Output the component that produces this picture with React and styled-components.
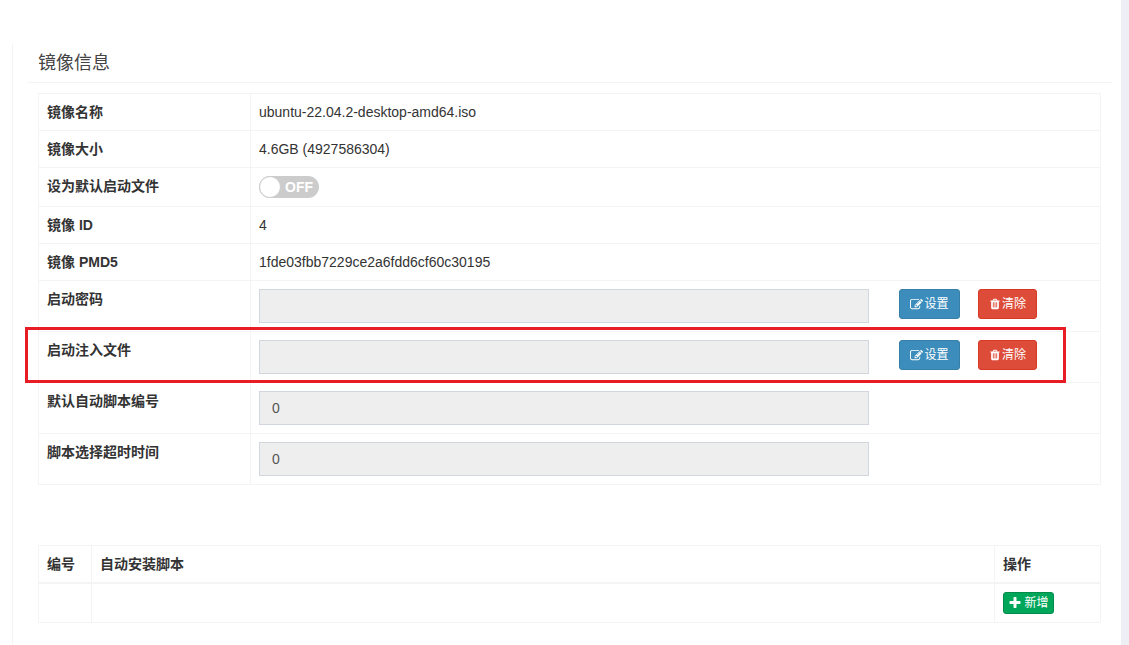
import styled, { createGlobalStyle } from 'styled-components'

const Global = createGlobalStyle`
html, body {
    margin: 0;
    padding: 0;
    height: 100%;
    overflow: hidden;
    background-color: #ecf0f5;
}
* { box-sizing: border-box; }
`;

const Page = styled.div`
    width: 1121px;
    height: 645px;
    background-color: white;
    padding: 43px 0 0 12px;
    font-family: "Liberation Sans", "Noto Sans CJK SC", sans-serif;
    font-size: 14px;
    line-height: 20px;
    color: #333;
    overflow: hidden;
`;

const Box = styled.div`
    height: 602px;
    border-left: 1px solid #f4f4f4;
    padding: 0 9px 0 15px;
    position: relative;
`;

const Title = styled.h3`
    margin: 0 0 10px;
    height: 40px;
    padding: 9px 0 0 10px;
    font-size: 18px;
    font-weight: 400;
    line-height: 22px;
    color: #444;
    border-bottom: 1px solid #f4f4f4;
`;

const Content = styled.div`
    padding: 0 10px;
`;

const Table = styled.table`
    width: 1063px;
    table-layout: fixed;
    border-collapse: collapse;
    border: 1px solid #f4f4f4;
    margin-bottom: ${p => p.$gap || 0}px;
`;

const Cell = styled.td`
    border: 1px solid #f4f4f4;
    padding: 8px;
    vertical-align: top;
    font-weight: ${p => (p.$bold ? 700 : 400)};
    height: ${p => p.$h || 37}px;
`;

const HeadCell = styled.th`
    border: 1px solid #f4f4f4;
    border-bottom-width: 2px;
    padding: 8px;
    text-align: left;
    height: 37px;
    font-weight: 700;
`;

const Field = styled.div`
    display: flex;
    align-items: flex-start;
`;

const Input = styled.div`
    width: 610px;
    height: 34px;
    padding: 6px 12px;
    background-color: #eee;
    border: 1px solid #d2d6de;
    color: #555;
    font-size: 14px;
    line-height: 20px;
`;

const Btn = styled.button`
    height: 30px;
    width: ${p => p.$w}px;
    margin-left: ${p => p.$ml}px;
    padding: 0;
    display: flex;
    align-items: center;
    justify-content: center;
    gap: 1px;
    border-radius: 3px;
    border: 1px solid ${p => p.$line};
    background-color: ${p => p.$bg};
    color: white;
    font-family: inherit;
    font-size: 12px;
    line-height: 18px;
`;

const AddBtn = styled.button`
    width: 51px;
    height: 22px;
    padding: 0;
    display: flex;
    align-items: center;
    justify-content: center;
    gap: 2px;
    border-radius: 3px;
    border: 1px solid #008d4c;
    background-color: #00a65a;
    color: white;
    font-family: inherit;
    font-size: 12px;
    line-height: 18px;
`;

const Switch = styled.div`
    width: 60px;
    height: 22px;
    border-radius: 11px;
    background-color: #ccc;
    display: flex;
    align-items: center;
    position: relative;
    padding-left: 26px;
    color: white;
    font-size: 14px;
    font-weight: 700;
    line-height: 22px;
`;

const Knob = styled.span`
    position: absolute;
    left: 0;
    top: 0;
    width: 22px;
    height: 22px;
    border-radius: 50%;
    background-color: white;
    border: 1px solid #ccc;
`;

const Highlight = styled.div`
    position: absolute;
    left: 12px;
    top: 284px;
    width: 1041px;
    height: 56px;
    border: 3px solid #e81c24;
    pointer-events: none;
`;

const Svg = styled.svg`
    width: ${p => p.$size}px;
    height: ${p => p.$size}px;
    fill: currentColor;
    flex: none;
`;

// font awesome 4 glyphs, the icon packages only carry the newer shapes
const EditIcon = () => (
  <Svg $size={13} viewBox="0 0 1792 1792">
    <path d="M888 1184l116-116-152-152-116 116v56h96v96h56zm440-720q-16-16-33 1l-350 350q-17 17-1 33t33-1l350-350q17-17 1-33zm80 594v190q0 119-84.500 203.500t-203.500 84.500h-832q-119 0-203.500-84.500t-84.500-203.500v-832q0-119 84.500-203.500t203.500-84.500h832q63 0 117 25 15 7 18 23 3 17-9 29l-49 49q-14 14-32 8-23-6-45-6h-832q-66 0-113 47t-47 113v832q0 66 47 113t113 47h832q66 0 113-47t47-113v-126q0-13 9-22l64-64q15-15 35-7t20 29zm-96-738l288 288-672 672h-288v-288zm444 132l-92 92-288-288 92-92q28-28 68-28t68 28l152 152q28 28 28 68t-28 68z" />
  </Svg>
);

const TrashIcon = () => (
  <Svg $size={12} viewBox="0 0 1792 1792">
    <path d="M704 1376v-704q0-14-9-23t-23-9h-64q-14 0-23 9t-9 23v704q0 14 9 23t23 9h64q14 0 23-9t9-23zm256 0v-704q0-14-9-23t-23-9h-64q-14 0-23 9t-9 23v704q0 14 9 23t23 9h64q14 0 23-9t9-23zm256 0v-704q0-14-9-23t-23-9h-64q-14 0-23 9t-9 23v704q0 14 9 23t23 9h64q14 0 23-9t9-23zm-544-992h448l-48-117q-7-9-17-11h-317q-10 2-17 11zm928 32v64q0 14-9 23t-23 9h-96v948q0 83-47 143.500t-113 60.500h-832q-66 0-113-58.500t-47-141.500v-952h-96q-14 0-23-9t-9-23v-64q0-14 9-23t23-9h309l70-167q15-37 54-63t79-26h320q40 0 79 26t54 63l70 167h309q14 0 23 9t9 23z" />
  </Svg>
);

const PlusIcon = () => (
  <Svg $size={14} viewBox="0 0 1792 1792">
    <path d="M1600 736v192q0 40-28 68t-68 28h-416v416q0 40-28 68t-68 28h-192q-40 0-68-28t-28-68v-416h-416q-40 0-68-28t-28-68v-192q0-40 28-68t68-28h416v-416q0-40 28-68t68-28h192q40 0 68 28t28 68v416h416q40 0 68 28t28 68z" />
  </Svg>
);

function FileField() {
  return (
    <Field>
      <Input />
      <Btn $w={61} $ml={30} $bg="#3c8dbc" $line="#367fa9"><EditIcon />设置</Btn>
      <Btn $w={59} $ml={18} $bg="#dd4b39" $line="#d73925"><TrashIcon />清除</Btn>
    </Field>
  )
}

export default function App() {
  return (
    <Page>
      <Global />
      <Box>
        <Title>镜像信息</Title>
        <Content>
          <Table $gap={60}>
            <colgroup>
              <col width="212" />
              <col />
            </colgroup>
            <tbody>
              <tr><Cell $bold>镜像名称</Cell><Cell>ubuntu-22.04.2-desktop-amd64.iso</Cell></tr>
              <tr><Cell $bold>镜像大小</Cell><Cell>4.6GB (4927586304)</Cell></tr>
              <tr><Cell $bold $h={39}>设为默认启动文件</Cell><Cell $h={39}><Switch><Knob />OFF</Switch></Cell></tr>
              <tr><Cell $bold>镜像 ID</Cell><Cell>4</Cell></tr>
              <tr><Cell $bold>镜像 PMD5</Cell><Cell>1fde03fbb7229ce2a6fdd6cf60c30195</Cell></tr>
              <tr><Cell $bold $h={51}>启动密码</Cell><Cell $h={51}><FileField /></Cell></tr>
              <tr><Cell $bold $h={51}>启动注入文件</Cell><Cell $h={51}><FileField /></Cell></tr>
              <tr><Cell $bold $h={51}>默认自动脚本编号</Cell><Cell $h={51}><Input>0</Input></Cell></tr>
              <tr><Cell $bold $h={51}>脚本选择超时时间</Cell><Cell $h={51}><Input>0</Input></Cell></tr>
            </tbody>
          </Table>
          <Table>
            <colgroup>
              <col width="53" />
              <col />
              <col width="106" />
            </colgroup>
            <thead>
              <tr><HeadCell>编号</HeadCell><HeadCell>自动安装脚本</HeadCell><HeadCell>操作</HeadCell></tr>
            </thead>
            <tbody>
              <tr>
                <Cell $h={39} />
                <Cell $h={39} />
                <Cell $h={39}><AddBtn><PlusIcon />新增</AddBtn></Cell>
              </tr>
            </tbody>
          </Table>
        </Content>
        <Highlight />
      </Box>
    </Page>
  )
}
